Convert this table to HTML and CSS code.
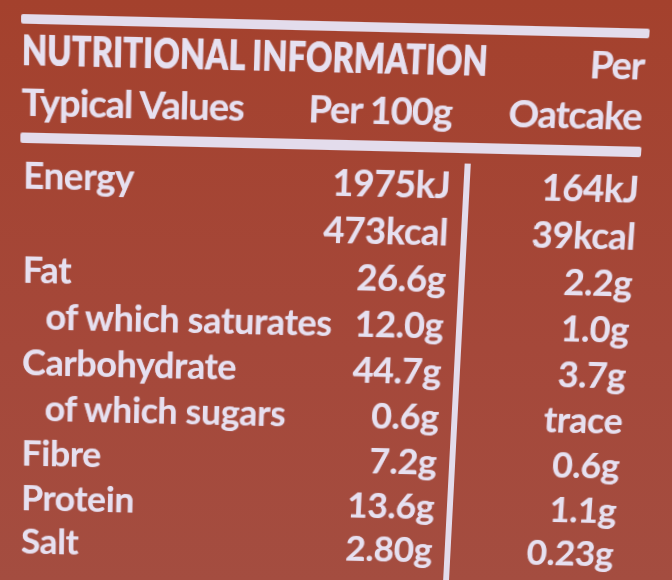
FILE: index.html
```html
<!DOCTYPE html>
<html lang="en">

<head>
    <meta charset="UTF-8">
    <meta name="viewport" content="width=device-width, initial-scale=1.0">
    <title>Nutritional Information</title>
    <link rel="stylesheet" href="styles.css">
</head>

<body>
    <div class="label">
        <div class="rule"></div>

        <div class="head-top">
            <span class="title">NUTRITIONAL INFORMATION</span>
            <span class="per">Per</span>
        </div>
        <div class="head-cols">
            <span class="name">Typical Values</span>
            <span class="val">Per 100g</span>
            <span class="serving">Oatcake</span>
        </div>

        <div class="rule rule-thick"></div>

        <div class="table">
            <div class="divider"></div>

            <span class="name">Energy</span>
            <span class="val">1975kJ</span>
            <span class="serving">164kJ</span>

            <span class="name"></span>
            <span class="val">473kcal</span>
            <span class="serving">39kcal</span>

            <span class="name">Fat</span>
            <span class="val">26.6g</span>
            <span class="serving">2.2g</span>

            <span class="name sub">of which saturates</span>
            <span class="val">12.0g</span>
            <span class="serving">1.0g</span>

            <span class="name">Carbohydrate</span>
            <span class="val">44.7g</span>
            <span class="serving">3.7g</span>

            <span class="name sub">of which sugars</span>
            <span class="val">0.6g</span>
            <span class="serving">trace</span>

            <span class="name">Fibre</span>
            <span class="val">7.2g</span>
            <span class="serving">0.6g</span>

            <span class="name">Protein</span>
            <span class="val">13.6g</span>
            <span class="serving">1.1g</span>

            <span class="name">Salt</span>
            <span class="val">2.80g</span>
            <span class="serving">0.23g</span>
        </div>
    </div>
</body>

</html>
```

FILE: styles.css
```css
body {
    margin: 0;
    height: 580px;
    overflow: hidden;
    background: linear-gradient(180deg, #a4412d 0%, #a5483a 60%, #a44d40 100%);
    font-family: 'Lato', 'Liberation Sans', sans-serif;
    color: #e6e0f0;
}

/* the label is photographed slightly tilted, so the whole block gets bent */
.label {
    width: 607px;
    margin-left: 19px;
    padding-top: 31.5px;
    transform-origin: 311px 370px;
    transform: perspective(1000px) rotateX(-6deg) skewX(-2.2deg) skewY(1.3deg);
    text-shadow: 0 0 1px rgba(240, 230, 250, 0.5);
}

.rule {
    height: 9px;
    background-color: #e3dcec;
    border-radius: 2px;
}

.rule-thick {
    height: 10px;
    margin-top: 10.5px;
}

.head-top {
    display: grid;
    grid-template-columns: minmax(0, 1fr) auto;
    align-items: baseline;
    margin-top: 3.25px;
    padding: 0 3px 0 1px;
    font-size: 40px;
    line-height: 42px;
}

.title {
    font-weight: 800;
    transform: scaleX(0.79);
    transform-origin: left;
    white-space: nowrap;
}

.per {
    font-size: 37px;
    font-weight: 700;
    letter-spacing: -1px;
}

.head-cols,
.table {
    display: grid;
    grid-template-columns: 289px 130px 13px 6px 166px;
    white-space: nowrap;
    font-weight: 700;
}

.head-cols {
    margin-top: 6.75px;
    padding-left: 1px;
    font-size: 37px;
    line-height: 40px;
    letter-spacing: -1px;
}

.table {
    grid-template-rows: repeat(9, 45.9px) 80px;
    margin-top: 8.35px;
    padding-left: 3px;
    font-size: 36px;
    line-height: 45.9px;
    letter-spacing: -0.4px;
}

.name {
    grid-column: 1;
}

.name.sub {
    padding-left: 23px;
}

.val {
    grid-column: 2;
    justify-self: end;
}

.serving {
    grid-column: 5;
    justify-self: end;
}

.divider {
    grid-column: 4;
    grid-row: 1 / -1;
    margin-top: 2px;
    background-color: #e3dcec;
}
```
